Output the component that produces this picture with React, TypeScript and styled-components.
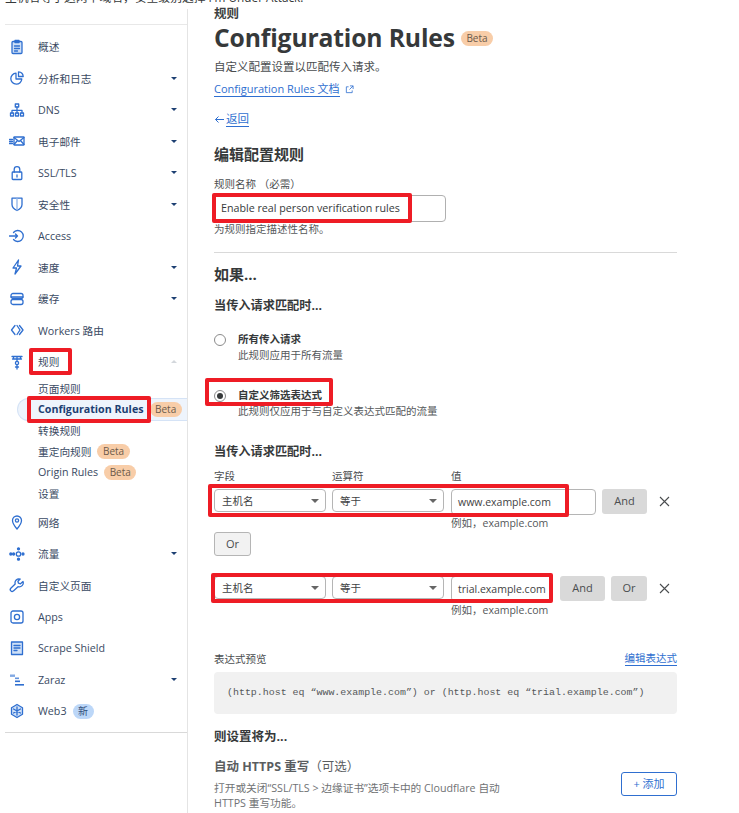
import React from "react";
import styled, { createGlobalStyle } from "styled-components";

const Global = createGlobalStyle`
  html, body { margin: 0; padding: 0; height: 813px; overflow: hidden; background: #fff; }
  body { font-family: "Open Sans", "Noto Sans CJK SC", sans-serif; color: #36393a; }
  * { box-sizing: border-box; }
`;

const Page = styled.div`
  position: relative;
  width: 739px;
  height: 813px;
  overflow: hidden;
  display: flex;
  flex-direction: column;
`;
const TopClip = styled.div`
  height: 5px;
  overflow: hidden;
  flex: none;
  font-size: 11.8px;
  line-height: 16px;
  color: #36393a;
  white-space: nowrap;
`;
const TopText = styled.div`
  margin-top: -11px;
  padding-left: 5px;
`;
const Body = styled.div`
  display: flex;
  flex: 1;
  min-height: 0;
`;
const Sidebar = styled.nav`
  width: 183px;
  flex: none;
  margin-left: 5px;
  margin-top: 19px;
  height: 709px;
  border-top: 1px solid #e8e8e8;
  border-bottom: 1px solid #d9d9d9;
  padding-top: 6px;
  position: relative;
  &::after {
    content: "";
    position: absolute;
    right: 0;
    top: -16px;
    height: 813px;
    width: 1px;
    background: #e4e4e4;
  }
`;
const NavRow = styled.div`
  height: 31.5px;
  display: flex;
  align-items: center;
  font-size: 10.7px;
  color: #3a4a63;
  padding-left: 4px;
  padding-right: 11px;
`;
const IconSlot = styled.span`
  width: 16px;
  height: 16px;
  flex: none;
  margin-right: 13px;
  color: #2f6fd0;
  display: inline-flex;
  svg { width: 16px; height: 16px; display: block; }
`;
const NavLabel = styled.span`
  flex: 1;
  display: flex;
  align-items: center;
  gap: 6px;
  white-space: nowrap;
`;
const Caret = styled.span<{ $up?: boolean }>`
  width: 0;
  height: 0;
  border-left: 3px solid transparent;
  border-right: 3px solid transparent;
  ${(p) =>
    p.$up
      ? "border-bottom: 3px solid #d3d7dc;"
      : "border-top: 3px solid #1d3f72;"}
`;
const SubList = styled.div`
  margin-bottom: 3px;
`;
const SubRow = styled.div<{ $active?: boolean }>`
  height: 21px;
  display: flex;
  align-items: center;
  gap: 6px;
  font-size: 10.7px;
  color: #3a4a63;
  padding-left: 33px;
  position: relative;
  white-space: nowrap;
  ${(p) =>
    p.$active &&
    `
    font-weight: 700;
    color: #1d3f72;
    margin-left: 12px;
    margin-right: 1px;
    padding-left: 20px;
    background: #eef4fc;
    border: 1px solid #d5e3f6;
    border-right: none;
    border-radius: 12px 0 0 12px;
    height: 23px;
    margin-top: -1px;
    margin-bottom: -1px;
  `}
`;
const Badge = styled.span<{ $blue?: boolean }>`
  display: inline-block;
  font-size: 10px;
  font-weight: 400;
  line-height: 15px;
  height: 15px;
  padding: 0 5.5px;
  border-radius: 8px;
  background: ${(p) => (p.$blue ? "#bcd7f8" : "#f8cda8")};
  color: ${(p) => (p.$blue ? "#31507c" : "#6b5a4a")};
`;

const Main = styled.main`
  width: 463px;
  margin-left: 26px;
  flex: none;
  padding-top: 1px;
`;
const Crumb = styled.div`
  font-size: 12.5px;
  font-weight: 700;
  line-height: 16px;
  color: #3c3f41;
`;
const TitleRow = styled.div`
  display: flex;
  align-items: center;
  gap: 6px;
  height: 30px;
  margin-top: 1px;
`;
const Title = styled.h1`
  margin: 0;
  font-size: 24.7px;
  font-weight: 700;
  line-height: 30px;
  color: #36393a;
  letter-spacing: -0.15px;
  white-space: nowrap;
`;
const Desc = styled.p`
  margin: 6px 0 0;
  font-size: 11.5px;
  line-height: 16px;
  color: #4a4d4f;
`;
const DocLink = styled.div`
  margin-top: 6px;
  height: 16px;
  display: flex;
  align-items: center;
  gap: 5px;
  color: #2f6fd0;
  font-size: 11px;
  line-height: 15px;
  span { border-bottom: 1px solid #2f6fd0; }
  svg { width: 9px; height: 9px; }
`;
const BackLink = styled.div`
  margin-top: 14px;
  height: 16px;
  display: flex;
  align-items: center;
  gap: 1px;
  color: #2f6fd0;
  font-size: 11.5px;
  line-height: 15px;
  span { border-bottom: 1px solid #2f6fd0; }
  svg { width: 11px; height: 9px; }
`;
const H2 = styled.h2<{ $top: number; $size?: number }>`
  margin: ${(p) => p.$top}px 0 0;
  font-size: ${(p) => p.$size ?? 15}px;
  font-weight: 700;
  line-height: 20px;
  color: #36393a;
`;
const Label = styled.div<{ $top?: number }>`
  margin-top: ${(p) => p.$top ?? 0}px;
  font-size: 10.5px;
  line-height: 14px;
  color: #4a4d4f;
`;
const NameInput = styled.div`
  margin-top: 4px;
  width: 232px;
  height: 27px;
  border: 1px solid #b0b0b0;
  border-radius: 4px;
  padding-left: 6px;
  font-size: 10.7px;
  line-height: 25px;
  color: #36393a;
  white-space: nowrap;
`;
const Help = styled.div`
  font-size: 10.5px;
  line-height: 14px;
  color: #55585a;
`;
const FieldHelp = styled(Help)`
  margin-top: 1px;
`;
const Rule = styled.hr`
  border: none;
  border-top: 1px solid #d9d9d9;
  margin: 16px 0 0;
`;
const RadioRow = styled.div<{ $top: number }>`
  display: flex;
  margin-top: ${(p) => p.$top}px;
  gap: 12px;
  align-items: flex-start;
`;
const Radio = styled.span<{ $on?: boolean }>`
  width: 12px;
  height: 12px;
  margin-top: 2px;
  flex: none;
  border-radius: 50%;
  border: 1px solid #8b8b8b;
  background: #fff;
  position: relative;
  ${(p) =>
    p.$on &&
    `&::after { content: ""; position: absolute; inset: 2px; border-radius: 50%; background: #36393a; }`}
`;
const RadioText = styled.div`
  display: flex;
  flex-direction: column;
  gap: 1px;
`;
const RadioTitle = styled.div`
  font-size: 10.5px;
  font-weight: 700;
  line-height: 15px;
  color: #36393a;
`;
const ColHead = styled.div`
  display: grid;
  grid-template-columns: 118px 119px 1fr;
  margin-top: 7px;
  font-size: 10.5px;
  line-height: 14px;
  color: #4a4d4f;
`;
const FilterRow = styled.div<{ $top: number }>`
  display: flex;
  align-items: flex-start;
  margin-top: ${(p) => p.$top}px;
`;
const Select = styled.div`
  height: 23px;
  width: 112px;
  margin-right: 6px;
  border: 1px solid #b5b5b5;
  border-radius: 4px;
  padding: 0 6px 0 7px;
  display: flex;
  align-items: center;
  justify-content: space-between;
  font-size: 10.5px;
  color: #3f4244;
  background: #fff;
`;
const SelectCaret = styled.span`
  width: 0;
  height: 0;
  border-left: 4px solid transparent;
  border-right: 4px solid transparent;
  border-top: 4px solid #666;
`;
const ValueCol = styled.div<{ $w: number }>`
  width: ${(p) => p.$w}px;
  margin-left: 1px;
  flex: none;
`;
const ValueInput = styled.div`
  height: 26px;
  border: 1px solid #b5b5b5;
  border-radius: 4px;
  padding-left: 6px;
  font-size: 10.5px;
  line-height: 24px;
  color: #3f4244;
  white-space: nowrap;
  overflow: hidden;
`;
const GreyBtn = styled.div<{ $w: number; $ml: number }>`
  width: ${(p) => p.$w}px;
  margin-left: ${(p) => p.$ml}px;
  height: 25px;
  border-radius: 3px;
  background: #d9d9d9;
  font-size: 11px;
  line-height: 24px;
  text-align: center;
  color: #4a4d4f;
  flex: none;
`;
const CloseX = styled.span`
  margin-left: 11px;
  margin-top: 6px;
  width: 13px;
  height: 13px;
  color: #4a4d4f;
  display: block;
  svg { display: block; width: 13px; height: 13px; }
`;
const OrBtn = styled.div`
  margin-top: 2px;
  width: 37px;
  height: 24px;
  border: 1px solid #b5b5b5;
  border-radius: 3px;
  background: #f2f2f2;
  font-size: 11px;
  line-height: 22px;
  text-align: center;
  color: #4a4d4f;
`;
const PreviewHead = styled.div`
  margin-top: 34px;
  display: flex;
  justify-content: space-between;
  align-items: flex-end;
  font-size: 10.5px;
  line-height: 14px;
  color: #4a4d4f;
`;
const EditLink = styled.span`
  color: #2f6fd0;
  border-bottom: 1px solid #2f6fd0;
`;
const CodeBox = styled.div`
  margin-top: 6px;
  height: 42px;
  background: #f1f1f1;
  border-radius: 4px;
  padding-left: 13px;
  font-family: "Liberation Mono", monospace;
  font-size: 9.95px;
  line-height: 42px;
  color: #55585a;
  white-space: nowrap;
`;
const SettingRow = styled.div`
  display: flex;
  justify-content: space-between;
  align-items: flex-start;
`;
const SettingTitle = styled.div`
  margin-top: 11px;
  font-size: 12.5px;
  line-height: 18px;
  font-weight: 700;
  color: #5a5d5f;
  span { font-weight: 400; }
`;
const SettingDesc = styled.div`
  margin-top: 5px;
  width: 300px;
  font-size: 10.7px;
  line-height: 15px;
  color: #707274;
`;
const AddBtn = styled.div`
  width: 56px;
  height: 24px;
  margin-top: 25px;
  border: 1px solid #2f6fd0;
  border-radius: 3px;
  text-align: center;
  font-size: 11px;
  line-height: 22px;
  color: #2f6fd0;
`;
const Mark = styled.div<{ $x: number; $y: number; $w: number; $h: number }>`
  position: absolute;
  left: ${(p) => p.$x}px;
  top: ${(p) => p.$y}px;
  width: ${(p) => p.$w}px;
  height: ${(p) => p.$h}px;
  border: 4px solid #ee1c25;
  border-radius: 2px;
  pointer-events: none;
`;

const S = (p: { children: React.ReactNode; fill?: boolean }) => (
  <svg viewBox="0 0 16 16" fill={p.fill ? "currentColor" : "none"} stroke={p.fill ? "none" : "currentColor"} strokeWidth="1.3" strokeLinecap="round" strokeLinejoin="round">
    {p.children}
  </svg>
);

const icons: Record<string, React.ReactNode> = {
  overview: <S><rect x="3" y="2.5" width="10" height="12" rx="1" fill="#cfe0f7" /><path d="M6 1.5h4v2H6zM5.5 7h5M5.5 9.5h5M5.5 12h3" /></S>,
  chart: <S><path d="M7 3.2a5.5 5.5 0 1 0 5.8 5.8H7z" /><path d="M9.5 1.8a5 5 0 0 1 4.7 4.7H9.5z" /></S>,
  dns: <S><rect x="6.3" y="2" width="3.4" height="3" /><path d="M8 5v3M3 11V8.3h10V11M8 8v3" /><rect x="1.5" y="11" width="3" height="3" /><rect x="6.5" y="11" width="3" height="3" /><rect x="11.5" y="11" width="3" height="3" /></S>,
  mail: <S><rect x="5" y="4" width="10" height="8" rx="0.5" /><path d="M5 4.5l5 4 5-4M5 11.5l3.5-4M15 11.5l-3.5-4M0.5 6.5h3M0.5 8.5h3M0.5 10.5h3" /></S>,
  lock: <S><rect x="3.2" y="7" width="9.6" height="7.5" rx="0.8" /><path d="M5.2 7V4.5a2.8 2.8 0 0 1 5.6 0V7" /><path d="M8 10v2" /></S>,
  shield: <S><path d="M3 2.2h10v6.3c0 3-2.5 4.8-5 6-2.5-1.2-5-3-5-6z" /><path d="M8 2.5v11.5" stroke="#8fb3e8" /></S>,
  access: <S><path d="M4.5 4.5a5.5 5.5 0 1 1 0 7" /><path d="M0.5 8h8M6.5 6l2 2-2 2" /></S>,
  bolt: <S><path d="M9.5 1L4 9h3.5L6 15l6-8H8.5z" /></S>,
  cache: <S><rect x="2" y="2.5" width="12" height="5" rx="2" /><rect x="2" y="8.5" width="12" height="5" rx="2" /><path d="M2 6h12" /></S>,
  workers: <S><path d="M6 3.5L2.5 8 6 12.5M8 3.5L11 8l-3 4.5M10.5 3.5L14 8l-3.5 4.5" /></S>,
  rules: <S><path d="M3 2.5h10M3.5 5h9M4.5 2.5V5M8 2.5v5M11.5 2.5V5" /><circle cx="8" cy="9" r="1.6" /><path d="M8 10.6V15M6.5 13h3" /></S>,
  pin: <S><path d="M8 15c-3-3.5-4.5-6-4.5-8.5a4.5 4.5 0 0 1 9 0C12.5 9 11 11.5 8 15z" /><circle cx="8" cy="6.5" r="1.6" /></S>,
  flow: <S><circle cx="9.5" cy="8" r="2.2" /><circle cx="9.5" cy="2.8" r="1" fill="currentColor" /><circle cx="9.5" cy="13.2" r="1" fill="currentColor" /><circle cx="14" cy="8" r="1" fill="currentColor" /><circle cx="1.8" cy="8" r="1" fill="currentColor" /><circle cx="4.6" cy="8" r="1" fill="currentColor" /></S>,
  wrench: <S><path d="M14 4.5l-2.5 2.3-2-.6-.6-2L11.2 2a4 4 0 0 0-5 5L1.8 11.3a1.8 1.8 0 0 0 2.6 2.6L9 9.7a4 4 0 0 0 5-5.2z" /></S>,
  apps: <S><rect x="2" y="2" width="12" height="12" rx="2" /><circle cx="8" cy="8" r="2.6" /></S>,
  scrape: <S><rect x="2.5" y="2" width="11" height="12.5" fill="#cfe0f7" /><path d="M5 5.5h6M5 8h6M5 10.5h3" /></S>,
  zaraz: <S fill><rect x="1" y="2.5" width="5" height="2.4" opacity="0.6" /><rect x="6" y="5.5" width="4" height="1.6" opacity="0.75" /><rect x="6" y="8.5" width="5" height="1.6" /><rect x="6" y="12" width="9" height="1.6" /></S>,
  web3: <S><path d="M8 1.5l5.5 3.2v6.6L8 14.5l-5.5-3.2V4.7z" fill="#cfe0f7" /><path d="M8 4v8M4.5 6l7 4M11.5 6l-7 4" /></S>,
};

const topNav: [string, string, boolean][] = [
  ["overview", "概述", false],
  ["chart", "分析和日志", true],
  ["dns", "DNS", true],
  ["mail", "电子邮件", true],
  ["lock", "SSL/TLS", true],
  ["shield", "安全性", true],
  ["access", "Access", false],
  ["bolt", "速度", true],
  ["cache", "缓存", true],
  ["workers", "Workers 路由", false],
];
const lowerNav: [string, string, boolean][] = [
  ["pin", "网络", false],
  ["flow", "流量", true],
  ["wrench", "自定义页面", false],
  ["apps", "Apps", false],
  ["scrape", "Scrape Shield", false],
  ["zaraz", "Zaraz", true],
];
const marks = [
  { x: 29, y: 348, w: 43, h: 27 },
  { x: 27, y: 396, w: 124, h: 27 },
  { x: 212, y: 193, w: 200, h: 30 },
  { x: 205, y: 378, w: 128, h: 28 },
  { x: 208, y: 484, w: 361, h: 33 },
  { x: 211, y: 573, w: 342, h: 30 },
];

const Row = ({ icon, label, caret, badge }: { icon: string; label: string; caret?: boolean; badge?: React.ReactNode }) => (
  <NavRow>
    <IconSlot>{icons[icon]}</IconSlot>
    <NavLabel>{label}{badge}</NavLabel>
    {caret && <Caret />}
  </NavRow>
);

const Close = () => (
  <CloseX>
    <svg viewBox="0 0 13 13" fill="none" stroke="currentColor" strokeWidth="1.1"><path d="M2 2l9 9M11 2l-9 9" /></svg>
  </CloseX>
);

const Filter = ({ top, value, width, children }: { top: number; value: string; width: number; children: React.ReactNode }) => (
  <FilterRow $top={top}>
    <Select>主机名<SelectCaret /></Select>
    <Select>等于<SelectCaret /></Select>
    <ValueCol $w={width}>
      <ValueInput>{value}</ValueInput>
      <FieldHelp>例如，example.com</FieldHelp>
    </ValueCol>
    {children}
    <Close />
  </FilterRow>
);

export default function App() {
  return (
    <Page>
      <Global />
      <TopClip><TopText>主机名等于这两个域名，安全级别选择 I'm Under Attack!</TopText></TopClip>
      <Body>
        <Sidebar>
          {topNav.map(([i, l, c]) => <Row key={l} icon={i} label={l} caret={c} />)}
          <NavRow>
            <IconSlot>{icons.rules}</IconSlot>
            <NavLabel>规则</NavLabel>
            <Caret $up />
          </NavRow>
          <SubList>
            <SubRow>页面规则</SubRow>
            <SubRow $active>Configuration Rules<Badge>Beta</Badge></SubRow>
            <SubRow>转换规则</SubRow>
            <SubRow>重定向规则<Badge>Beta</Badge></SubRow>
            <SubRow>Origin Rules<Badge>Beta</Badge></SubRow>
            <SubRow>设置</SubRow>
          </SubList>
          {lowerNav.map(([i, l, c]) => <Row key={l} icon={i} label={l} caret={c} />)}
          <Row icon="web3" label="Web3" badge={<Badge $blue>新</Badge>} />
        </Sidebar>
        <Main>
          <Crumb>规则</Crumb>
          <TitleRow><Title>Configuration Rules</Title><Badge>Beta</Badge></TitleRow>
          <Desc>自定义配置设置以匹配传入请求。</Desc>
          <DocLink>
            <span>Configuration Rules 文档</span>
            <svg viewBox="0 0 10 10" fill="none" stroke="currentColor" strokeWidth="0.9"><path d="M4 2H1.5v6.5H8V6M5.5 1H9v3.5M9 1L5 5" /></svg>
          </DocLink>
          <BackLink>
            <svg viewBox="0 0 11 9" fill="none" stroke="currentColor" strokeWidth="1"><path d="M10 4.5H1.5M4.5 1.5l-3 3 3 3" /></svg>
            <span>返回</span>
          </BackLink>
          <H2 $top={17}>编辑配置规则</H2>
          <Label $top={13}>规则名称 （必需）</Label>
          <NameInput>Enable real person verification rules</NameInput>
          <Help>为规则指定描述性名称。</Help>
          <Rule />
          <H2 $top={11} $size={15}>如果...</H2>
          <H2 $top={12} $size={12.2}>当传入请求匹配时...</H2>
          <RadioRow $top={16}>
            <Radio />
            <RadioText><RadioTitle>所有传入请求</RadioTitle><Help>此规则应用于所有流量</Help></RadioText>
          </RadioRow>
          <RadioRow $top={26}>
            <Radio $on />
            <RadioText><RadioTitle>自定义筛选表达式</RadioTitle><Help>此规则仅应用于与自定义表达式匹配的流量</Help></RadioText>
          </RadioRow>
          <H2 $top={24} $size={12.2}>当传入请求匹配时...</H2>
          <ColHead><span>字段</span><span>运算符</span><span>值</span></ColHead>
          <Filter top={6} value="www.example.com" width={145}>
            <GreyBtn $w={45} $ml={6}>And</GreyBtn>
          </Filter>
          <OrBtn>Or</OrBtn>
          <Filter top={20} value="trial.example.com" width={102}>
            <GreyBtn $w={45} $ml={7}>And</GreyBtn>
            <GreyBtn $w={36} $ml={6}>Or</GreyBtn>
          </Filter>
          <PreviewHead><span>表达式预览</span><EditLink>编辑表达式</EditLink></PreviewHead>
          <CodeBox>(http.host eq “www.example.com”) or (http.host eq “trial.example.com”)</CodeBox>
          <H2 $top={13} $size={12.5}>则设置将为...</H2>
          <SettingRow>
            <div>
              <SettingTitle>自动 HTTPS 重写<span>（可选）</span></SettingTitle>
              <SettingDesc>打开或关闭“SSL/TLS &gt; 边缘证书”选项卡中的 Cloudflare 自动 HTTPS 重写功能。</SettingDesc>
            </div>
            <AddBtn>+ 添加</AddBtn>
          </SettingRow>
        </Main>
      </Body>
      {marks.map((m, i) => <Mark key={i} $x={m.x} $y={m.y} $w={m.w} $h={m.h} />)}
    </Page>
  );
}
